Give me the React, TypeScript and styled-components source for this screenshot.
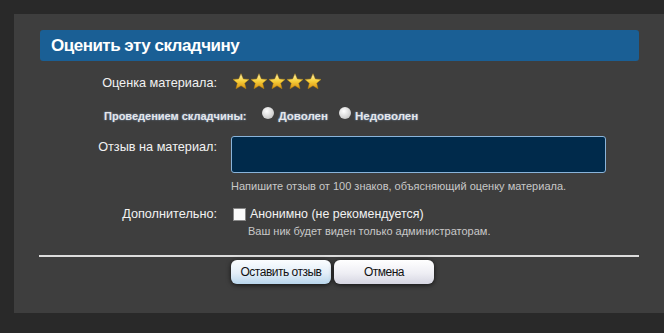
import styled, { createGlobalStyle } from "styled-components";

const GlobalStyle = createGlobalStyle`
  html, body {
    margin: 0;
    padding: 0;
    background: #292929;
    font-family: "Liberation Sans", Arial, sans-serif;
  }
`;

const Page = styled.div`
  position: relative;
  width: 664px;
  height: 333px;
  overflow: hidden;
`;

const Overlay = styled.div`
  position: absolute;
  left: 14px;
  top: 14px;
  width: 660px;
  height: 299px;
  background: rgba(63, 63, 63, 0.96);
  padding: 16px 0 0 26px;
  box-sizing: border-box;
  color: #fff;
`;

const Dialog = styled.div`
  width: 599px;
  display: flex;
  flex-direction: column;
`;

const TitleBar = styled.div`
  background: #1a5f95;
  border-radius: 3px;
  height: 31px;
  display: flex;
  align-items: center;
  padding-left: 11px;
  font-size: 17px;
  font-weight: bold;
  letter-spacing: -0.5px;
  color: #fff;
  margin-bottom: 10px;
`;

const Row = styled.div<{ $h: number }>`
  display: grid;
  grid-template-columns: 177px 1fr;
  column-gap: 14px;
  min-height: ${(p) => p.$h}px;
  align-items: start;
`;

const Label = styled.div<{ $pt?: number }>`
  text-align: right;
  font-size: 12.7px;
  color: #f2f2f2;
  padding-top: ${(p) => p.$pt ?? 0}px;
`;

const RateRow = styled.div`
  display: flex;
  align-items: center;
  height: 37px;
  padding: 0 0 4px 64px;
  box-sizing: border-box;
  gap: 16px;
`;

const BoldLabel = styled.div`
  font-size: 11px;
  font-weight: bold;
  color: #e4e6ea;
  text-shadow: 0 0 2px rgba(140, 170, 205, 0.9);
  white-space: nowrap;
`;

const Stars = styled.div`
  display: flex;
  margin: 1px 0 0 1px;
`;

const Radios = styled.div`
  display: flex;
  align-items: center;
  gap: 11px;
`;

const RadioOpt = styled.label`
  display: flex;
  align-items: center;
  gap: 4px;
  font-size: 11.5px;
  font-weight: bold;
  color: #e4e6ea;
  text-shadow: 0 0 2px rgba(140, 170, 205, 0.9);
`;

const RadioDot = styled.span`
  width: 12px;
  height: 12px;
  border-radius: 50%;
  background: radial-gradient(circle at 40% 35%, #ffffff, #d0d0d0 65%, #a8a8a8);
  margin-top: -5px;
`;

const TextArea = styled.div`
  width: 373px;
  height: 35px;
  background: #002a4b;
  border: 1px solid #8ab4da;
  border-radius: 3px;
`;

const Hint = styled.div<{ $indent?: number; $mt?: number }>`
  font-size: 11px;
  color: #c8c8c8;
  margin-top: ${(p) => p.$mt ?? 7}px;
  padding-left: ${(p) => p.$indent ?? 0}px;
`;

const CheckRow = styled.label`
  display: flex;
  align-items: center;
  gap: 4px;
  font-size: 12.4px;
  color: #f2f2f2;
  padding-left: 2px;
`;

const CheckBox = styled.span`
  width: 11px;
  height: 11px;
  background: #fafafa;
  border: 1px solid #888;
`;

const Separator = styled.div`
  height: 2px;
  background: #dcdcdc;
  margin: 18px 0 3px -1px;
`;

const Buttons = styled.div`
  display: flex;
  gap: 3px;
  padding-left: 191px;
`;

const Button = styled.button<{ $primary?: boolean }>`
  width: 100px;
  height: 24px;
  border: none;
  border-radius: 6px;
  font-family: "Liberation Sans", Arial, sans-serif;
  font-size: 12px;
  letter-spacing: -0.5px;
  color: #111;
  background: ${(p) =>
    p.$primary
      ? "linear-gradient(#fbfdff, #e3eef8 55%, #b9d6ec)"
      : "linear-gradient(#ffffff, #eeeef4 55%, #d6d6e2)"};
  box-shadow: 0 1px 5px rgba(0, 0, 0, 0.7);
`;

const Star = () => (
  <svg width="18" height="19" viewBox="0 0 24 24">
    <defs>
      <linearGradient id="sg" x1="0" y1="0" x2="0" y2="1">
        <stop offset="0" stopColor="#fff6b8" />
        <stop offset="0.5" stopColor="#f6cf3a" />
        <stop offset="1" stopColor="#d98f10" />
      </linearGradient>
    </defs>
    <path
      d="M12 1.5l3.1 7.1 7.6.6-5.8 5 1.8 7.5L12 17.7l-6.7 4 1.8-7.5-5.8-5 7.6-.6z"
      fill="url(#sg)"
      stroke="#b8860b"
      strokeWidth="0.6"
    />
  </svg>
);

export default function App() {
  return (
    <>
      <GlobalStyle />
      <Page>
        <Overlay>
          <Dialog>
            <TitleBar>Оценить эту складчину</TitleBar>
            <Row $h={28}>
              <Label $pt={5}>Оценка материала:</Label>
              <Stars>
                {[0, 1, 2, 3, 4].map((i) => (
                  <Star key={i} />
                ))}
              </Stars>
            </Row>
            <RateRow>
              <BoldLabel>Проведением складчины:</BoldLabel>
              <Radios>
                <RadioOpt>
                  <RadioDot />
                  Доволен
                </RadioOpt>
                <RadioOpt>
                  <RadioDot />
                  Недоволен
                </RadioOpt>
              </Radios>
            </RateRow>
            <Row $h={71}>
              <Label $pt={4}>Отзыв на материал:</Label>
              <div>
                <TextArea />
                <Hint>Напишите отзыв от 100 знаков, объясняющий оценку материала.</Hint>
              </div>
            </Row>
            <Row $h={0}>
              <Label $pt={0}>Дополнительно:</Label>
              <div>
                <CheckRow>
                  <CheckBox />
                  Анонимно (не рекомендуется)
                </CheckRow>
                <Hint $indent={17} $mt={4}>
                  Ваш ник будет виден только администраторам.
                </Hint>
              </div>
            </Row>
            <Separator />
            <Buttons>
              <Button $primary>Оставить отзыв</Button>
              <Button>Отмена</Button>
            </Buttons>
          </Dialog>
        </Overlay>
      </Page>
    </>
  );
}
